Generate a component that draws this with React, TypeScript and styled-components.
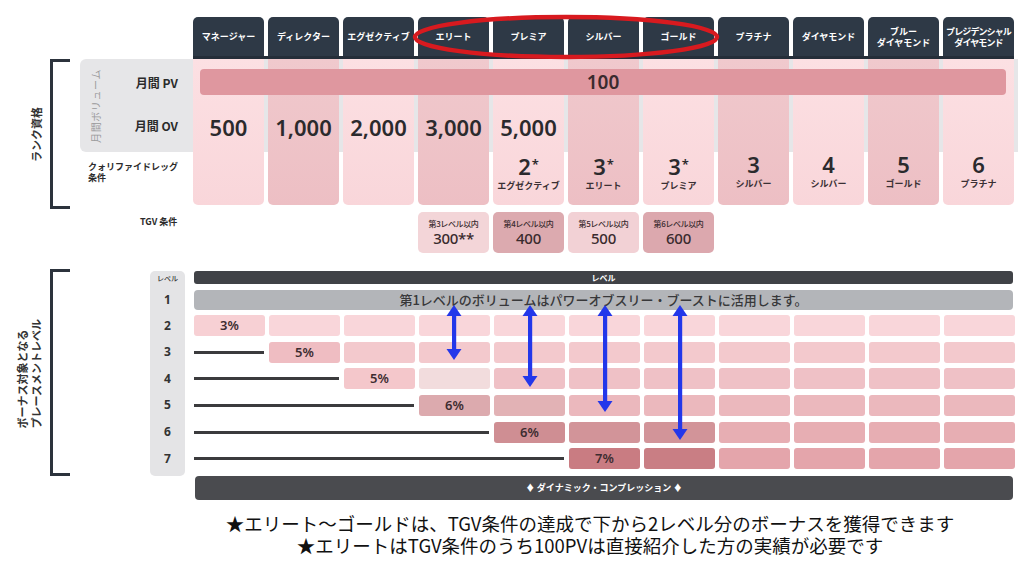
import React from 'react';
import styled, { createGlobalStyle } from 'styled-components';

const JP = `"Noto Sans CJK JP", "Noto Sans", sans-serif`;
const NUM = `"Noto Sans", "Noto Sans CJK JP", sans-serif`;

const GlobalStyle = createGlobalStyle`
  html, body { margin: 0; padding: 0; background: #ffffff; }
  body { font-family: ${JP}; width: 1024px; height: 563px; overflow: hidden; }
`;

type Rank = { name: string; ov?: string; leg?: string; star?: boolean; legRank?: string; tight?: boolean };

const ranks: Rank[] = [
  { name: 'マネージャー', ov: '500' },
  { name: 'ディレクター', ov: '1,000' },
  { name: 'エグゼクティブ', ov: '2,000' },
  { name: 'エリート', ov: '3,000' },
  { name: 'プレミア', ov: '5,000', leg: '2', star: true, legRank: 'エグゼクティブ' },
  { name: 'シルバー', leg: '3', star: true, legRank: 'エリート' },
  { name: 'ゴールド', leg: '3', star: true, legRank: 'プレミア' },
  { name: 'プラチナ', leg: '3', legRank: 'シルバー' },
  { name: 'ダイヤモンド', leg: '4', legRank: 'シルバー' },
  { name: 'ブルー\nダイヤモンド', leg: '5', legRank: 'ゴールド' },
  { name: 'プレジデンシャル\nダイヤモンド', leg: '6', legRank: 'プラチナ', tight: true },
];

const tgv = [
  { col: 3, label: '第3レベル以内', value: '300**', bg: '#f3d5d8' },
  { col: 4, label: '第4レベル以内', value: '400', bg: '#dcaaaf' },
  { col: 5, label: '第5レベル以内', value: '500', bg: '#f2d1d5' },
  { col: 6, label: '第6レベル以内', value: '600', bg: '#dca8ae' },
];

type LevelRow = { level: number; pct: string; base: string; pctBg: string; extra?: Record<number, string> };

const levelRows: LevelRow[] = [
  { level: 2, pct: '3%', base: '#f9d6da', pctBg: '#f7d0d4' },
  { level: 3, pct: '5%', base: '#f3c9cd', pctBg: '#efbdc2' },
  { level: 4, pct: '5%', base: '#efc1c6', pctBg: '#f4c7cb', extra: { 3: '#f2dcdd' } },
  { level: 5, pct: '6%', base: '#ebb8bd', pctBg: '#dcaaae', extra: { 4: '#e2b2b5' } },
  { level: 6, pct: '6%', base: '#e7aeb3', pctBg: '#cf8e93', extra: { 5: '#d29499', 6: '#d29499' } },
  { level: 7, pct: '7%', base: '#e4a5ab', pctBg: '#c97c82', extra: { 6: '#c97e84' } },
];

const arrows = [
  { x: 454, top: 305, bottom: 360 },
  { x: 530, top: 305, bottom: 387 },
  { x: 605, top: 305, bottom: 412 },
  { x: 680, top: 305, bottom: 440 },
];

/* ---------- layout ---------- */

const Page = styled.div`
  position: relative;
  width: 1024px;
  height: 563px;
  display: flex;
  flex-direction: column;
  background: #ffffff;
`;

const TabStrip = styled.div`
  position: relative;
  display: flex;
  gap: 4px;
  margin: 17px 0 0 193px;
  width: 821px;
  border-bottom: 3px solid #252e39;
`;

const Tab = styled.div<{ $tight?: boolean }>`
  width: 71px;
  height: 39px;
  background: #2e3946;
  border-radius: 5px 5px 0 0;
  color: #ffffff;
  font: 700 9px/11px ${JP};
  letter-spacing: ${(p) => (p.$tight ? '-0.9px' : '0')};
  display: flex;
  align-items: center;
  justify-content: center;
  text-align: center;
  white-space: pre-line;
`;

const Highlight = styled.svg`
  position: absolute;
  left: 217px;
  top: -3px;
  pointer-events: none;
  overflow: visible;
`;

const RankGrid = styled.div`
  display: grid;
  grid-template-columns: 45px 35px 113px repeat(11, 75px);
  grid-template-rows: 93px 53px 4px;
`;

const SideLabel = styled.div<{ $rows: string }>`
  grid-column: 1;
  grid-row: ${(p) => p.$rows};
  justify-self: end;
  align-self: center;
  margin-right: 2px;
  writing-mode: vertical-rl;
  text-orientation: sideways;
  transform: rotate(180deg);
  font: 700 11px/14px ${JP};
  color: #333333;
  white-space: pre;
`;

const Bracket = styled.div<{ $rows: string; $offset?: number }>`
  grid-column: 2;
  grid-row: ${(p) => p.$rows};
  margin-left: 5px;
  margin-top: ${(p) => p.$offset ?? 0}px;
  width: 17px;
  border: 3px solid #2c333c;
  border-right: none;
`;

const GreyBand = styled.div`
  grid-column: 3 / -1;
  grid-row: 1;
  background: #e6e6e8;
  border-radius: 6px 0 0 6px;
`;

const VolumeLabels = styled.div`
  grid-column: 3;
  grid-row: 1;
  display: flex;
  align-items: center;
  padding: 0 15px 0 10px;
`;

const VerticalNote = styled.div`
  writing-mode: vertical-rl;
  text-orientation: sideways;
  transform: rotate(180deg);
  font: 400 10px/12px ${JP};
  color: #9a9a9c;
  letter-spacing: 0.6px;
`;

const LabelStack = styled.div`
  margin-left: auto;
  display: flex;
  flex-direction: column;
  gap: 27px;
  padding-bottom: 3px;
`;

const RowLabel = styled.div`
  font: 700 12px/16px ${JP};
  color: #2b2b2b;
  text-align: right;
`;

const RankColumn = styled.div<{ $col: number; $dark: boolean }>`
  grid-column: ${(p) => p.$col};
  grid-row: 1 / 3;
  width: 71px;
  background: ${(p) =>
    p.$dark
      ? 'linear-gradient(180deg, #f0c9cd 0%, #edbfc4 100%)'
      : 'linear-gradient(180deg, #fce0e3 0%, #f9d6da 100%)'};
  border-radius: 0 0 5px 5px;
`;

const PVBar = styled.div`
  grid-column: 4 / -1;
  grid-row: 1;
  align-self: start;
  margin: 10px 12px 0 7px;
  height: 26px;
  background: #df979f;
  border-radius: 4px;
  display: flex;
  align-items: center;
  justify-content: center;
  font: 600 19px/26px ${NUM};
  color: #3a2a2e;
`;

const OVValue = styled.div<{ $col: number }>`
  grid-column: ${(p) => p.$col};
  grid-row: 1;
  align-self: end;
  width: 71px;
  margin-bottom: 12px;
  text-align: center;
  font: 600 22px/26px ${NUM};
  color: #2b2a2d;
`;

const QualLabel = styled.div`
  grid-column: 3;
  grid-row: 2;
  padding: 9px 0 0 8px;
  font: 700 9px/11px ${JP};
  color: #2b2b2b;
  white-space: pre;
`;

const LegCell = styled.div<{ $col: number }>`
  grid-column: ${(p) => p.$col};
  grid-row: 2;
  width: 71px;
  display: flex;
  flex-direction: column;
  align-items: center;
`;

const LegNumber = styled.div`
  font: 600 22px/24px ${NUM};
  color: #2b2a2d;
`;

const Star = styled.span`
  font-size: 13px;
  vertical-align: 6px;
  margin-left: 1px;
`;

const LegRank = styled.div`
  margin-top: 2px;
  font: 700 9px/12px ${JP};
  color: #3a3034;
`;

const TgvGrid = styled.div`
  display: grid;
  grid-template-columns: 45px 35px 113px repeat(11, 75px);
  grid-template-rows: 41px;
  margin-top: 3px;
`;

const TgvLabel = styled.div`
  grid-column: 3;
  grid-row: 1;
  padding: 4px 0 0 60px;
  font: 700 9px/11px ${JP};
  color: #2b2b2b;
`;

const TgvBox = styled.div<{ $col: number; $bg: string }>`
  grid-column: ${(p) => p.$col};
  grid-row: 1;
  width: 71px;
  background: ${(p) => p.$bg};
  border-radius: 5px;
  display: flex;
  flex-direction: column;
  align-items: center;
  justify-content: center;
  color: #3a2b2e;
`;

const TgvCaption = styled.div`
  font: 500 8px/11px ${JP};
  letter-spacing: -0.4px;
`;

const TgvValue = styled.div`
  font: 500 15px/18px ${NUM};
  letter-spacing: -0.3px;
`;

const LevelGrid = styled.div`
  position: relative;
  display: grid;
  grid-template-columns: 45px 105px 35px 9px repeat(11, 75px);
  grid-template-rows: 13px 20px repeat(6, 21px) 1.4px;
  row-gap: 5.6px;
  padding-top: 2px;
  margin-top: 16px;
`;

const LevelRail = styled.div`
  grid-column: 3;
  grid-row: 1 / -1;
  background: #e4e4e6;
  border-radius: 5px;
`;

const LevelNum = styled.div<{ $row: number; $small?: boolean }>`
  grid-column: 3;
  grid-row: ${(p) => p.$row};
  align-self: center;
  text-align: center;
  font: ${(p) => (p.$small ? `500 7px/10px ${JP}` : `700 12px/14px ${NUM}`)};
  color: #333333;
`;

const HeaderBar = styled.div`
  grid-column: 5 / -1;
  grid-row: 1;
  margin-right: 6px;
  background: #404247;
  border-radius: 3px;
  color: #ffffff;
  font: 700 8px/13px ${JP};
  text-align: center;
`;

const FirstLevelBar = styled.div`
  grid-column: 5 / -1;
  grid-row: 2;
  margin-right: 6px;
  background: #b3b5b9;
  border-radius: 4px;
  color: #38383a;
  font: 500 13px/20px ${JP};
  text-align: center;
`;

const RowLine = styled.div<{ $row: number; $span: number }>`
  grid-column: 5 / span ${(p) => p.$span};
  grid-row: ${(p) => p.$row};
  align-self: center;
  height: 3px;
  margin-right: 5px;
  background: #3b3b3d;
`;

const Cell = styled.div<{ $row: number; $col: number; $bg: string }>`
  grid-column: ${(p) => p.$col};
  grid-row: ${(p) => p.$row};
  width: 71px;
  background: ${(p) => p.$bg};
  border-radius: 3px;
  text-align: center;
  font: 600 13px/21px ${NUM};
  color: #3d2c30;
`;

const ArrowLayer = styled.svg`
  position: absolute;
  left: 0;
  top: 0;
  pointer-events: none;
  overflow: visible;
`;

const DynamicBar = styled.div`
  margin: 0 0 0 195px;
  width: 818px;
  height: 24px;
  background: #4a4b4f;
  border-radius: 4px;
  color: #ffffff;
  font: 700 9px/24px ${JP};
  text-align: center;
`;

const Notes = styled.div`
  margin-top: 12px;
  padding-left: 156px;
  display: flex;
  flex-direction: column;
  align-items: center;
`;

const NoteLine = styled.div`
  height: 22px;
  font: 400 18.5px/22px ${JP};
  color: #111111;
  white-space: nowrap;
`;

export default function App() {
  const sectionTop = 269;
  return (
    <>
      <GlobalStyle />
      <Page>
        <TabStrip>
          {ranks.map((r) => (
            <Tab key={r.name} $tight={r.tight}>
              {r.name}
            </Tab>
          ))}
          <Highlight width="316" height="48" viewBox="0 0 316 48">
            <ellipse cx="156" cy="23" rx="151" ry="20" fill="none" stroke="#d81a1f" strokeWidth="4.5" />
          </Highlight>
        </TabStrip>

        <RankGrid>
          <SideLabel $rows="1 / -1">ランク資格</SideLabel>
          <Bracket $rows="1 / -1" />
          <GreyBand />
          <VolumeLabels>
            <VerticalNote>月間ボリューム</VerticalNote>
            <LabelStack>
              <RowLabel>月間 PV</RowLabel>
              <RowLabel>月間 OV</RowLabel>
            </LabelStack>
          </VolumeLabels>
          {ranks.map((r, i) => (
            <RankColumn key={'c' + i} $col={i + 4} $dark={i % 2 === 1} />
          ))}
          <PVBar>100</PVBar>
          {ranks.map((r, i) =>
            r.ov ? (
              <OVValue key={'o' + i} $col={i + 4}>
                {r.ov}
              </OVValue>
            ) : null
          )}
          <QualLabel>{'クォリファイドレッグ\n条件'}</QualLabel>
          {ranks.map((r, i) =>
            r.leg ? (
              <LegCell key={'l' + i} $col={i + 4}>
                <LegNumber>
                  {r.leg}
                  {r.star ? <Star>*</Star> : null}
                </LegNumber>
                <LegRank>{r.legRank}</LegRank>
              </LegCell>
            ) : null
          )}
        </RankGrid>

        <TgvGrid>
          <TgvLabel>TGV 条件</TgvLabel>
          {tgv.map((t) => (
            <TgvBox key={t.col} $col={t.col + 4} $bg={t.bg}>
              <TgvCaption>{t.label}</TgvCaption>
              <TgvValue>{t.value}</TgvValue>
            </TgvBox>
          ))}
        </TgvGrid>

        <LevelGrid>
          <SideLabel $rows="1 / -1">{'ボーナス対象となる\nプレースメントレベル'}</SideLabel>
          <Bracket $rows="1 / -1" $offset={-2} />
          <LevelRail />
          <LevelNum $row={1} $small>
            レベル
          </LevelNum>
          {[1, 2, 3, 4, 5, 6, 7].map((n) => (
            <LevelNum key={n} $row={n + 1}>
              {n}
            </LevelNum>
          ))}
          <HeaderBar>レベル</HeaderBar>
          <FirstLevelBar>第1レベルのボリュームはパワーオブスリー・ブーストに活用します。</FirstLevelBar>
          {levelRows.map((row, ri) => {
            const gridRow = ri + 3;
            const pctCol = ri;
            const items: React.ReactNode[] = [];
            if (pctCol > 0) {
              items.push(<RowLine key={'line' + ri} $row={gridRow} $span={pctCol} />);
            }
            for (let c = pctCol; c < 11; c++) {
              const bg = c === pctCol ? row.pctBg : row.extra?.[c] ?? row.base;
              items.push(
                <Cell key={ri + '-' + c} $row={gridRow} $col={c + 5} $bg={bg}>
                  {c === pctCol ? row.pct : ''}
                </Cell>
              );
            }
            return items;
          })}
          <ArrowLayer width="1024" height="210">
            {arrows.map((a) => {
              const t = a.top - sectionTop;
              const b = a.bottom - sectionTop;
              return (
                <g key={a.x} fill="#2337ea" stroke="none">
                  <rect x={a.x - 2} y={t + 8} width="4.2" height={b - t - 16} />
                  <polygon points={`${a.x - 7.5},${t + 11} ${a.x + 7.5},${t + 11} ${a.x},${t}`} />
                  <polygon points={`${a.x - 7.5},${b - 11} ${a.x + 7.5},${b - 11} ${a.x},${b}`} />
                </g>
              );
            })}
          </ArrowLayer>
        </LevelGrid>

        <DynamicBar>♦ ダイナミック・コンプレッション ♦</DynamicBar>

        <Notes>
          <NoteLine>★エリート～ゴールドは、TGV条件の達成で下から2レベル分のボーナスを獲得できます</NoteLine>
          <NoteLine>★エリートはTGV条件のうち100PVは直接紹介した方の実績が必要です</NoteLine>
        </Notes>
      </Page>
    </>
  );
}
